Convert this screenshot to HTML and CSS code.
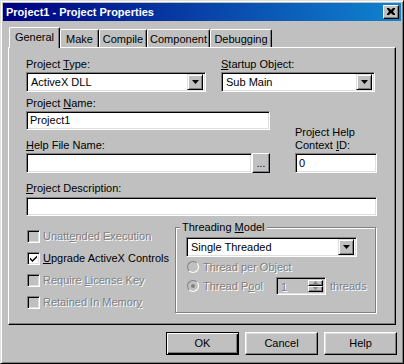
FILE: index.html
```html
<!DOCTYPE html>
<html>
<head>
<meta charset="utf-8">
<link rel="stylesheet" href="styles.css">
</head>
<body>
<div class="window">
  <div class="titlebar">
    <span class="title">Project1 - Project Properties</span>
    <span class="close"><svg width="8" height="7" viewBox="0 0 8 7"><path d="M0 0h2l2 2 2-2h2v1L6 3.5 8 6v1H6L4 5 2 7H0V6l2-2.5L0 1z" fill="#000"/></svg></span>
  </div>
  <div class="tabs">
    <div class="tab active w-general">General</div>
    <div class="tab w-make">Make</div>
    <div class="tab w-compile">Compile</div>
    <div class="tab w-component">Component</div>
    <div class="tab w-debug">Debugging</div>
  </div>
  <div class="panel">
    <div class="row1">
      <div class="col-type">
        <div class="lbl">Project <u>T</u>ype:</div>
        <div class="combo"><span class="val">ActiveX DLL</span><span class="drop"><svg width="7" height="4" viewBox="0 0 7 4"><path d="M0 0h7L3.5 4z" fill="#000"/></svg></span></div>
      </div>
      <div class="col-startup">
        <div class="lbl"><u>S</u>tartup Object:</div>
        <div class="combo"><span class="val">Sub Main</span><span class="drop"><svg width="7" height="4" viewBox="0 0 7 4"><path d="M0 0h7L3.5 4z" fill="#000"/></svg></span></div>
      </div>
    </div>
    <div class="grid2">
      <div class="lbl ga1">Project <u>N</u>ame:</div>
      <div class="field ga2">Project1</div>
      <div class="lbl gb23">Project Help<br>Context <u>I</u>D:</div>
      <div class="lbl ga3"><u>H</u>elp File Name:</div>
      <div class="filerow ga4"><div class="field grow"></div><div class="dots">...</div></div>
      <div class="field gb4">0</div>
    </div>
    <div class="lbl desc-lbl"><u>P</u>roject Description:</div>
    <div class="field desc"></div>
    <div class="bottom">
      <div class="checks">
        <div class="chk disabled"><span class="box"></span><span class="t">Unatt<u>e</u>nded Execution</span></div>
        <div class="chk"><span class="box white"><svg width="9" height="9" viewBox="0 0 9 9"><path d="M1 3.5l2.5 2.5L8 1.5V3.5L3.5 8 1 5.5z" fill="#000"/></svg></span><span class="t"><u>U</u>pgrade ActiveX Controls</span></div>
        <div class="chk disabled"><span class="box"></span><span class="t">Require <u>L</u>icense Key</span></div>
        <div class="chk disabled"><span class="box"></span><span class="t">Retained In Memor<u>y</u></span></div>
      </div>
      <fieldset class="group">
        <legend>Threading <u>M</u>odel</legend>
        <div class="combo thr"><span class="val">Single Threaded</span><span class="drop"><svg width="7" height="4" viewBox="0 0 7 4"><path d="M0 0h7L3.5 4z" fill="#000"/></svg></span></div>
        <div class="radio-row disabled"><span class="radio"></span><span class="t">Thread per Object</span></div>
        <div class="radio-row disabled"><span class="radio on"></span><span class="t pool">Thread P<u>o</u>ol</span>
          <div class="spin"><span class="sval">1</span><span class="sbtns"><span class="sb"><svg width="5" height="3" viewBox="0 0 5 3"><path d="M0 3h5L2.5 0z" fill="#808080"/></svg></span><span class="sb"><svg width="5" height="3" viewBox="0 0 5 3"><path d="M0 0h5L2.5 3z" fill="#808080"/></svg></span></span></div>
          <span class="t thr-lbl">threads</span>
        </div>
      </fieldset>
    </div>
  </div>
  <div class="footer">
    <div class="btn default"><span>OK</span></div>
    <div class="btn"><span>Cancel</span></div>
    <div class="btn"><span>Help</span></div>
  </div>
</div>
</body>
</html>
```

FILE: styles.css
```css
* { box-sizing: border-box; }
html, body { margin: 0; padding: 0; background: #c0c0c0; }
body {
  font-family: "Liberation Sans", Arial, sans-serif;
  font-size: 11px;
  color: #000;
}
.window {
  width: 404px;
  height: 364px;
  background: #c0c0c0;
  border: 1px solid;
  border-color: #dfdfdf #000 #000 #dfdfdf;
  box-shadow: inset 1px 1px #fff, inset -1px -1px #808080;
  padding: 2px;
}
.titlebar {
  height: 18px;
  background: linear-gradient(to right, #000080, #1084d0);
  display: flex;
  align-items: center;
  justify-content: space-between;
  padding: 0 2px 0 3px;
}
.title {
  color: #fff;
  font-weight: bold;
  font-size: 11px;
  line-height: 18px;
}
.close {
  width: 16px;
  height: 14px;
  background: #c0c0c0;
  border: 1px solid;
  border-color: #fff #000 #000 #fff;
  box-shadow: inset -1px -1px #808080;
  display: flex;
  align-items: center;
  justify-content: center;
  padding-bottom: 1px;
}
.tabs {
  display: flex;
  align-items: flex-end;
  margin: 6px 0 0 6px;
  height: 20px;
  position: relative;
  z-index: 2;
}
.tab {
  height: 18px;
  border: 1px solid;
  border-bottom: none;
  border-color: #fff #000 transparent #fff;
  box-shadow: inset -1px 0 #808080;
  border-radius: 2px 2px 0 0;
  padding-top: 3px;
  line-height: 13px;
  text-align: center;
  background: #c0c0c0;
}
.tab.active {
  height: 21px;
  margin-bottom: -1px;
}
.w-general { width: 51px; }
.w-make { width: 39px; }
.w-compile { width: 48px; }
.w-component { width: 63px; }
.w-debug { width: 62px; }

.panel {
  margin-left: 5px;
  width: 388px;
  height: 278px;
  border: 1px solid;
  border-color: #fff #000 #000 #fff;
  box-shadow: inset -1px -1px #808080;
  padding: 10px 0 0 17px;
  position: relative;
  z-index: 1;
}
.lbl { line-height: 13px; white-space: nowrap; }
.row1 { display: flex; gap: 15px; }
.col-type { width: 180px; }
.col-startup { width: 154px; }
.combo {
  margin-top: 1px;
  height: 20px;
  background: #fff;
  border: 1px solid;
  border-color: #808080 #fff #fff #808080;
  box-shadow: inset 1px 1px #000, inset -1px -1px #dfdfdf;
  display: flex;
  align-items: center;
  padding: 2px;
}
.combo .val { flex: 1; padding-left: 2px; line-height: 14px; }
.drop {
  width: 16px;
  height: 16px;
  background: #c0c0c0;
  border: 1px solid;
  border-color: #dfdfdf #000 #000 #dfdfdf;
  box-shadow: inset 1px 1px #fff, inset -1px -1px #808080;
  display: flex;
  align-items: center;
  justify-content: center;
}
.field {
  height: 19px;
  background: #fff;
  border: 1px solid;
  border-color: #808080 #fff #fff #808080;
  box-shadow: inset 1px 1px #000, inset -1px -1px #dfdfdf;
  padding: 0 3px;
  line-height: 17px;
}
.grid2 {
  margin-top: 5px;
  display: grid;
  grid-template-columns: 244px 82px;
  grid-template-rows: 13px 20px 22px 21px;
  column-gap: 25px;
}
.ga1 { grid-column: 1; grid-row: 1; }
.ga2 { grid-column: 1; grid-row: 2; margin-top: 1px; }
.gb23 { grid-column: 2; grid-row: 2 / 4; align-self: end; }
.ga3 { grid-column: 1; grid-row: 3; align-self: end; }
.ga4 { grid-column: 1; grid-row: 4; margin-top: 1px; }
.gb4 { grid-column: 2; grid-row: 4; margin-top: 1px; height: 20px; line-height: 18px; }
.filerow { display: flex; height: 20px; }
.filerow .grow { flex: 1; height: 20px; }
.dots {
  width: 18px;
  height: 20px;
  border: 1px solid;
  border-color: #fff #000 #000 #fff;
  box-shadow: inset -1px -1px #808080;
  text-align: center;
  line-height: 20px;
  font-size: 10px;
}
.desc-lbl { margin-top: 9px; }
.desc { margin-top: 2px; width: 351px; height: 19px; }
.bottom { display: flex; margin-top: 5px; }
.checks { width: 149px; padding-top: 4px; }
.chk {
  height: 22px;
  display: flex;
  align-items: center;
  padding-left: 1px;
  white-space: nowrap;
}
.box {
  width: 13px;
  height: 13px;
  border: 1px solid;
  border-color: #808080 #fff #fff #808080;
  box-shadow: inset 1px 1px #000, inset -1px -1px #dfdfdf;
  background: #c0c0c0;
  margin-right: 3px;
  display: flex;
  align-items: center;
  justify-content: center;
  flex: none;
}
.box.white { background: #fff; }
.disabled .t { color: #808080; text-shadow: 1px 1px 0 #fff; }
.group {
  width: 201px;
  margin: 0;
  padding: 0 0 7px 0;
  border: 1px solid #808080;
  box-shadow: inset 1px 1px #fff, 1px 1px 0 #fff;
  min-width: 0;
}
.group legend {
  margin-left: 4px;
  padding: 0 2px;
  line-height: 13px;
  background: #c0c0c0;
}
.combo.thr { margin: 3px 0 0 10px; width: 171px; }
.radio-row {
  height: 19px;
  display: flex;
  align-items: center;
  padding-left: 11px;
  white-space: nowrap;
}
.radio {
  width: 12px;
  height: 12px;
  border-radius: 50%;
  border: 1px solid;
  border-color: #808080 #fff #fff #808080;
  background: #c0c0c0;
  margin-right: 4px;
  display: flex;
  align-items: center;
  justify-content: center;
  flex: none;
}
.radio.on::after {
  content: "";
  width: 4px;
  height: 4px;
  border-radius: 50%;
  background: #808080;
}
.pool { width: 73px; }
.spin {
  width: 50px;
  height: 18px;
  border: 1px solid;
  border-color: #808080 #fff #fff #808080;
  box-shadow: inset 1px 1px #000, inset -1px -1px #dfdfdf;
  background: #c0c0c0;
  display: flex;
  padding: 2px;
}
.sval { flex: 1; color: #808080; text-shadow: 1px 1px 0 #fff; line-height: 14px; padding-left: 2px; }
.sbtns { display: flex; flex-direction: column; width: 15px; }
.sb {
  flex: 1;
  border: 1px solid;
  border-color: #fff #000 #000 #fff;
  box-shadow: inset -1px -1px #808080;
  display: flex;
  align-items: center;
  justify-content: center;
}
.thr-lbl { margin-left: 4px; }
.footer {
  display: flex;
  justify-content: flex-end;
  gap: 6px;
  margin-top: 7px;
  padding-right: 4px;
}
.btn {
  width: 73px;
  height: 23px;
  border: 1px solid;
  border-color: #fff #000 #000 #fff;
  box-shadow: inset -1px -1px #808080, inset 1px 1px #dfdfdf;
  display: flex;
  align-items: center;
  justify-content: center;
  line-height: 13px;
}
.btn.default {
  border: 1px solid #000;
  box-shadow: inset 1px 1px #fff, inset -1px -1px #000, inset -2px -2px #808080;
}
```
